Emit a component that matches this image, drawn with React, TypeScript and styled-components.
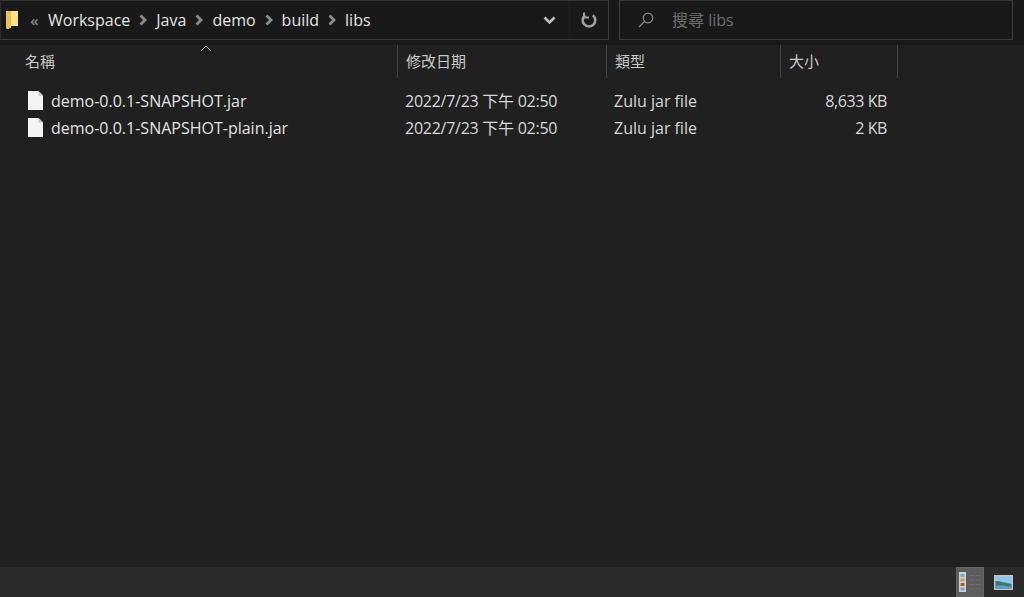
import React from "react"
import styled, { createGlobalStyle } from "styled-components"

const GlobalStyle = createGlobalStyle`
  html, body { margin: 0; padding: 0; height: 100%; background: #202020; overflow: hidden; }
  #root { height: 100%; }
`

const Window = styled.div`
  width: 1024px;
  height: 597px;
  display: flex;
  flex-direction: column;
  background: #202020;
  color: #e6e6e6;
  font-family: "Open Sans", "Noto Sans CJK TC", sans-serif;
  font-size: 16px;
`

const Toolbar = styled.div`
  height: 45px;
  box-sizing: border-box;
  background: #191919;
  display: flex;
  padding-right: 11px;
  gap: 10px;
`

const AddressBox = styled.div`
  width: 609px;
  height: 40px;
  box-sizing: border-box;
  border: 1px solid #3d3d3d;
  border-top-color: #333;
  border-left-color: #2c2c2c;
  background: #191919;
  display: flex;
  align-items: center;
  padding-left: 5px;
`

const Crumbs = styled.div`
  display: flex;
  align-items: center;
  flex: 1;
  min-width: 0;
`

const Crumb = styled.span`
  color: #e4e4e4;
  line-height: 36px;
`

const Overflow = styled.span`
  color: #8a8a8a;
  font-size: 15px;
  font-weight: 600;
  width: 28px;
  text-align: center;
  padding-left: 1px;
  box-sizing: border-box;
`

const Sep = styled.svg`
  width: 26px;
  height: 12px;
  flex: none;
`

const AddressButton = styled.div<{ $divider?: boolean }>`
  width: 39px;
  height: 38px;
  display: flex;
  align-items: center;
  justify-content: center;
  flex: none;
  box-sizing: border-box;
  ${(p) => p.$divider && "border-left: 1px solid #1f1f1f;"}
`

const SearchBox = styled.div`
  flex: 1;
  height: 40px;
  box-sizing: border-box;
  border: 1px solid #3d3d3d;
  border-top-color: #333;
  background: #191919;
  display: flex;
  align-items: center;
  padding-left: 18px;
  padding-bottom: 2px;
  gap: 18px;
  color: #6f6f6f;
`

const HeaderRow = styled.div`
  height: 33px;
  display: flex;
  padding-left: 17px;
`

const HeaderCell = styled.div<{ $width: number }>`
  width: ${(p) => p.$width}px;
  box-sizing: border-box;
  padding-left: 8px;
  padding-top: 1px;
  line-height: 30px;
  font-size: 15px;
  color: #c9c9c9;
  border-right: 1px solid #434343;
  position: relative;
`

const SortCaret = styled.svg`
  position: absolute;
  left: 183px;
  top: 0;
  width: 12px;
  height: 7px;
`

const FileList = styled.div`
  flex: 1;
  padding-top: 9px;
`

const FileRow = styled.div`
  height: 27px;
  display: flex;
  align-items: center;
  padding-left: 17px;
`

const Cell = styled.div<{ $width: number }>`
  width: ${(p) => p.$width}px;
  height: 22px;
  line-height: 22px;
  box-sizing: border-box;
  padding-left: 7px;
  color: #d8d8d8;
  font-size: 16px;
  white-space: nowrap;
`

const DateCell = styled(Cell)`
  letter-spacing: -0.26px;
`

const SizeCell = styled(Cell)`
  text-align: right;
  letter-spacing: -0.4px;
`

const NameCell = styled(Cell)`
  display: flex;
  align-items: center;
  padding-left: 11px;
  gap: 8px;
  color: #e4e4e4;
`

const StatusBar = styled.div`
  height: 30px;
  background: #2b2b2b;
  display: flex;
  justify-content: flex-end;
  align-items: stretch;
  padding-right: 7px;
  gap: 5px;
`

const ViewButton = styled.div<{ $active?: boolean }>`
  width: 28px;
  display: flex;
  align-items: center;
  justify-content: center;
  background: ${(p) => (p.$active ? "#5c5c5c" : "transparent")};
  box-shadow: ${(p) => (p.$active ? "inset 0 0 0 1px #666" : "none")};
`

const files = [
  { name: "demo-0.0.1-SNAPSHOT.jar", date: "2022/7/23 下午 02:50", type: "Zulu jar file", size: "8,633 KB" },
  { name: "demo-0.0.1-SNAPSHOT-plain.jar", date: "2022/7/23 下午 02:50", type: "Zulu jar file", size: "2 KB" },
]

const crumbs = ["Workspace", "Java", "demo", "build", "libs"]

function FolderIcon() {
  return (
    <svg width="14" height="20" viewBox="0 0 14 20" style={{ flex: "none" }}>
      <path d="M0 1h12v15H5l-2 3H1l-1-1z" fill="#f8d775" />
      <path d="M5 1h7v15H5z" fill="#fbe08f" />
      <path d="M0 1h5v17H1l-1-1z" fill="#eec04f" />
    </svg>
  )
}

function FileIcon() {
  return (
    <svg width="15" height="19" viewBox="0 0 15 19" style={{ flex: "none" }}>
      <path d="M0 0h10.5l4.5 4.5v14.5H0z" fill="#f4f4f4" />
      <path d="M10.5 0v4.5h4.5z" fill="#c4c4c4" />
    </svg>
  )
}

function Chevron() {
  return (
    <Sep viewBox="0 0 26 12">
      <path d="M10.5 1.5l4.5 4.5-4.5 4.5" fill="none" stroke="#8c8c8c" strokeWidth="2.8" />
    </Sep>
  )
}

export default function App() {
  return (
    <Window>
      <GlobalStyle />
      <Toolbar>
        <AddressBox>
          <FolderIcon />
          <Crumbs>
            <Overflow>«</Overflow>
            {crumbs.map((c, i) => (
              <React.Fragment key={c}>
                <Crumb>{c}</Crumb>
                {i < crumbs.length - 1 && <Chevron />}
              </React.Fragment>
            ))}
          </Crumbs>
          <AddressButton>
            <svg width="13" height="9" viewBox="0 0 13 9">
              <path d="M1.5 1.5l5 5 5-5" fill="none" stroke="#bdbdbd" strokeWidth="2.6" />
            </svg>
          </AddressButton>
          <AddressButton $divider>
            <svg width="16" height="17" viewBox="0 0 16 17">
              <path d="M4.2 3.2a6.3 6.3 0 1 0 7.6 0" fill="none" stroke="#a0a0a0" strokeWidth="2.6" />
              <path d="M3 0.5v5h5" fill="none" stroke="#a0a0a0" strokeWidth="2" />
            </svg>
          </AddressButton>
        </AddressBox>
        <SearchBox>
          <svg width="16" height="16" viewBox="0 0 16 16" style={{ flex: "none", marginTop: 2 }}>
            <circle cx="10" cy="6" r="4.8" fill="none" stroke="#8a8a8a" strokeWidth="1.2" />
            <path d="M6.5 9.5L1 15" stroke="#8a8a8a" strokeWidth="1.2" />
          </svg>
          <span>搜尋 libs</span>
        </SearchBox>
      </Toolbar>
      <HeaderRow>
        <HeaderCell $width={381}>
          名稱
          <SortCaret viewBox="0 0 12 7">
            <path d="M1 6l5-5 5 5" fill="none" stroke="#aaa" strokeWidth="1" />
          </SortCaret>
        </HeaderCell>
        <HeaderCell $width={209}>修改日期</HeaderCell>
        <HeaderCell $width={174}>類型</HeaderCell>
        <HeaderCell $width={117}>大小</HeaderCell>
      </HeaderRow>
      <FileList>
        {files.map((f) => (
          <FileRow key={f.name}>
            <NameCell $width={381}>
              <FileIcon />
              {f.name}
            </NameCell>
            <DateCell $width={209}>{f.date}</DateCell>
            <Cell $width={174}>{f.type}</Cell>
            <SizeCell $width={106}>{f.size}</SizeCell>
          </FileRow>
        ))}
      </FileList>
      <StatusBar>
        <ViewButton $active>
          <svg width="22" height="20" viewBox="0 0 22 20">
            <rect width="7" height="20" fill="#d2d2d2" />
            <rect x="1.5" y="2" width="4" height="3" fill="#7aa6c4" />
            <rect x="1.5" y="6.5" width="4" height="3" fill="#b8a060" />
            <rect x="1.5" y="11" width="4" height="3" fill="#b0583a" />
            <rect x="1.5" y="15.5" width="4" height="3" fill="#7aa6c4" />
            <path d="M10 3.5h12M10 8h12M10 12.5h12M10 17h12" stroke="#6c6c6c" strokeWidth="1" strokeDasharray="5 1.5" />
          </svg>
        </ViewButton>
        <ViewButton>
          <svg width="19" height="15" viewBox="0 0 19 15">
            <rect width="19" height="15" fill="#c4c4c4" />
            <rect x="1.5" y="1.5" width="16" height="12" fill="#8fc4ee" />
            <path d="M1.5 6c5 0 10 2 16 3v4.5h-16z" fill="#3f7a68" />
            <path d="M1.5 11c6-1 11 0 16 1v1.5h-16z" fill="#5b9fd0" />
          </svg>
        </ViewButton>
      </StatusBar>
    </Window>
  )
}
